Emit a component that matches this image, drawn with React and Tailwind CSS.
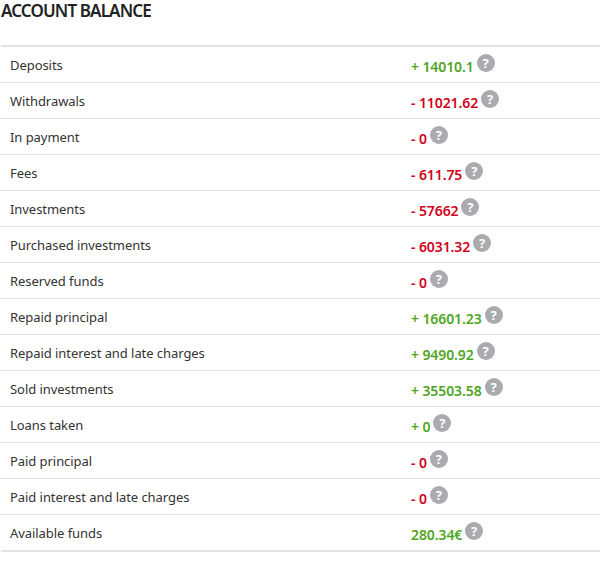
const rows = [
  ["Deposits", "+ 14010.1", "g"],
  ["Withdrawals", "- 11021.62", "r"],
  ["In payment", "- 0", "r"],
  ["Fees", "- 611.75", "r"],
  ["Investments", "- 57662", "r"],
  ["Purchased investments", "- 6031.32", "r"],
  ["Reserved funds", "- 0", "r"],
  ["Repaid principal", "+ 16601.23", "g"],
  ["Repaid interest and late charges", "+ 9490.92", "g"],
  ["Sold investments", "+ 35503.58", "g"],
  ["Loans taken", "+ 0", "g"],
  ["Paid principal", "- 0", "r"],
  ["Paid interest and late charges", "- 0", "r"],
  ["Available funds", "280.34€", "g"],
];

function Help() {
  return (
    <span className="mb-[3px] ml-[3px] flex h-[18px] w-[18px] items-center justify-center rounded-full bg-[#a9abae] text-[13px] font-bold leading-none text-white">
      ?
    </span>
  );
}

export default function App() {
  return (
    <div className="h-[562px] w-[600px] overflow-hidden bg-white text-[#333] [font-family:'Noto_Sans',sans-serif]">
      <h2 className="h-[45px] pl-[1px] pt-[1px] text-[17px] font-semibold uppercase leading-[20px] tracking-[-0.87px] text-[#222]">
        Account balance
      </h2>
      <div className="ml-[1px] border-y-2 border-[#e2e2e2]">
        {rows.map(([label, value, tone], i) => (
          <div
            key={label}
            className={`flex items-center ${i > 0 ? "h-[36px] border-t border-[#e2e2e2]" : "h-[35px]"}`}
          >
            <span className="mt-[2px] w-[410px] pl-[9px] text-[13px] tracking-[-0.06px]">{label}</span>
            <span className="flex items-center">
              <span className={`mt-[3px] text-[14px] font-semibold tracking-[-0.1px] ${tone === "g" ? "text-[#4fa61e]" : "text-[#d0021b]"}`}>
                {value}
              </span>
              <Help />
            </span>
          </div>
        ))}
      </div>
    </div>
  );
}
